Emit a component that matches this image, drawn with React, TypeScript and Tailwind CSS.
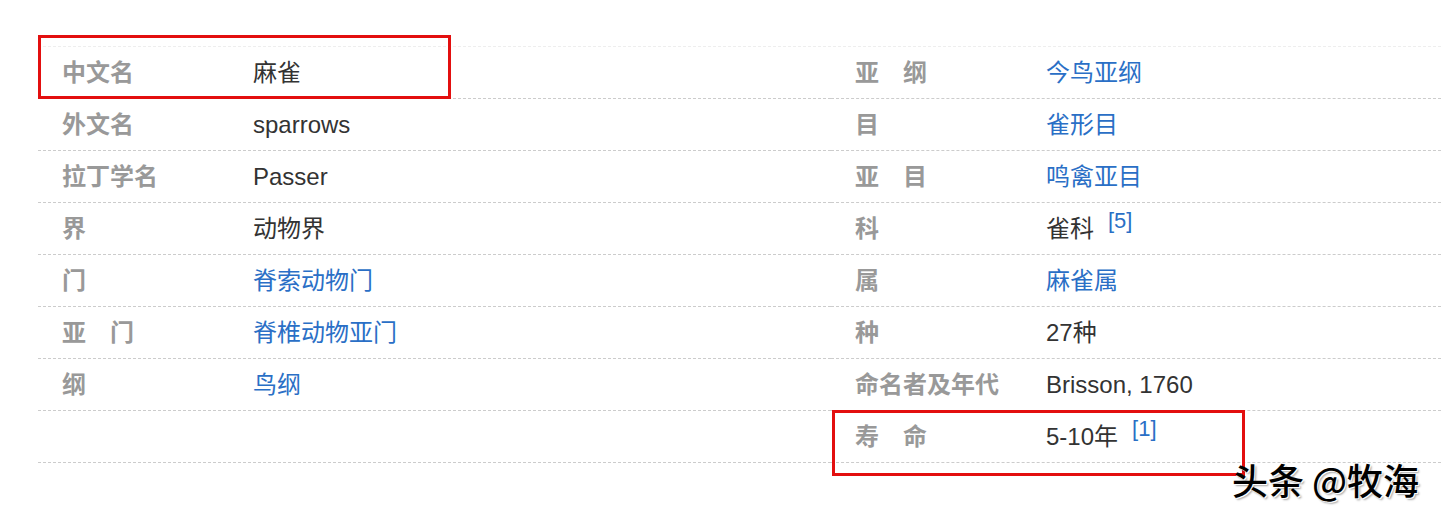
import React from "react";

type Cell = { label: string; value: string; link?: boolean; note?: string };

const leftRows: (Cell | null)[] = [
  { label: "中文名", value: "麻雀" },
  { label: "外文名", value: "sparrows" },
  { label: "拉丁学名", value: "Passer" },
  { label: "界", value: "动物界" },
  { label: "门", value: "脊索动物门", link: true },
  { label: "亚\u3000门", value: "脊椎动物亚门", link: true },
  { label: "纲", value: "鸟纲", link: true },
  null,
];

const rightRows: (Cell | null)[] = [
  { label: "亚\u3000纲", value: "今鸟亚纲", link: true },
  { label: "目", value: "雀形目", link: true },
  { label: "亚\u3000目", value: "鸣禽亚目", link: true },
  { label: "科", value: "雀科", note: "[5]" },
  { label: "属", value: "麻雀属", link: true },
  { label: "种", value: "27种" },
  { label: "命名者及年代", value: "Brisson, 1760" },
  { label: "寿\u3000命", value: "5-10年", note: "[1]" },
];

const InfoRow: React.FC<{ cell: Cell | null }> = ({ cell }) => (
  <div className="h-[52px] border-b border-dashed border-[#cccccc] flex items-center px-6">
    {cell && (
      <>
        <div className="w-[191px] shrink-0 font-bold text-[#999999]">{cell.label}</div>
        <div className={cell.link ? "text-[#2a6fc6]" : "text-[#333333]"}>
          {cell.value}
          {cell.note && (
            <span className="ml-[14px] text-[22px] text-[#2a6fc6] relative -top-[9px]">{cell.note}</span>
          )}
        </div>
      </>
    )}
  </div>
);

export default function App() {
  return (
    <div className="relative w-[1441px] h-[517px] bg-white overflow-hidden font-['Liberation_Sans','Noto_Sans_CJK_SC',sans-serif] text-[24px] leading-none">
      <div className="pt-[46px] pl-[38px]">
        <div className="border-t border-dashed border-[#eeeeee] grid grid-cols-[793px_610px]">
          <div className="flex flex-col">
            {leftRows.map((c, i) => (
              <InfoRow key={i} cell={c} />
            ))}
          </div>
          <div className="flex flex-col">
            {rightRows.map((c, i) => (
              <InfoRow key={i} cell={c} />
            ))}
          </div>
        </div>
      </div>

      {/* red highlight boxes */}
      <div className="absolute left-[38px] top-[35px] w-[413px] h-[64px] border-[3px] border-[#e30f0f]" />
      <div className="absolute left-[832px] top-[410px] w-[413px] h-[66px] border-[3px] border-[#e30f0f]" />

      {/* watermark */}
      <div className="absolute left-[1232px] top-[461px] text-[36px] font-medium text-black font-['Noto_Sans_CJK_SC',sans-serif] [text-shadow:1px_1px_0_#fff,2px_2px_2px_rgba(0,0,0,0.35)]">
        头条 @牧海
      </div>
    </div>
  );
}
